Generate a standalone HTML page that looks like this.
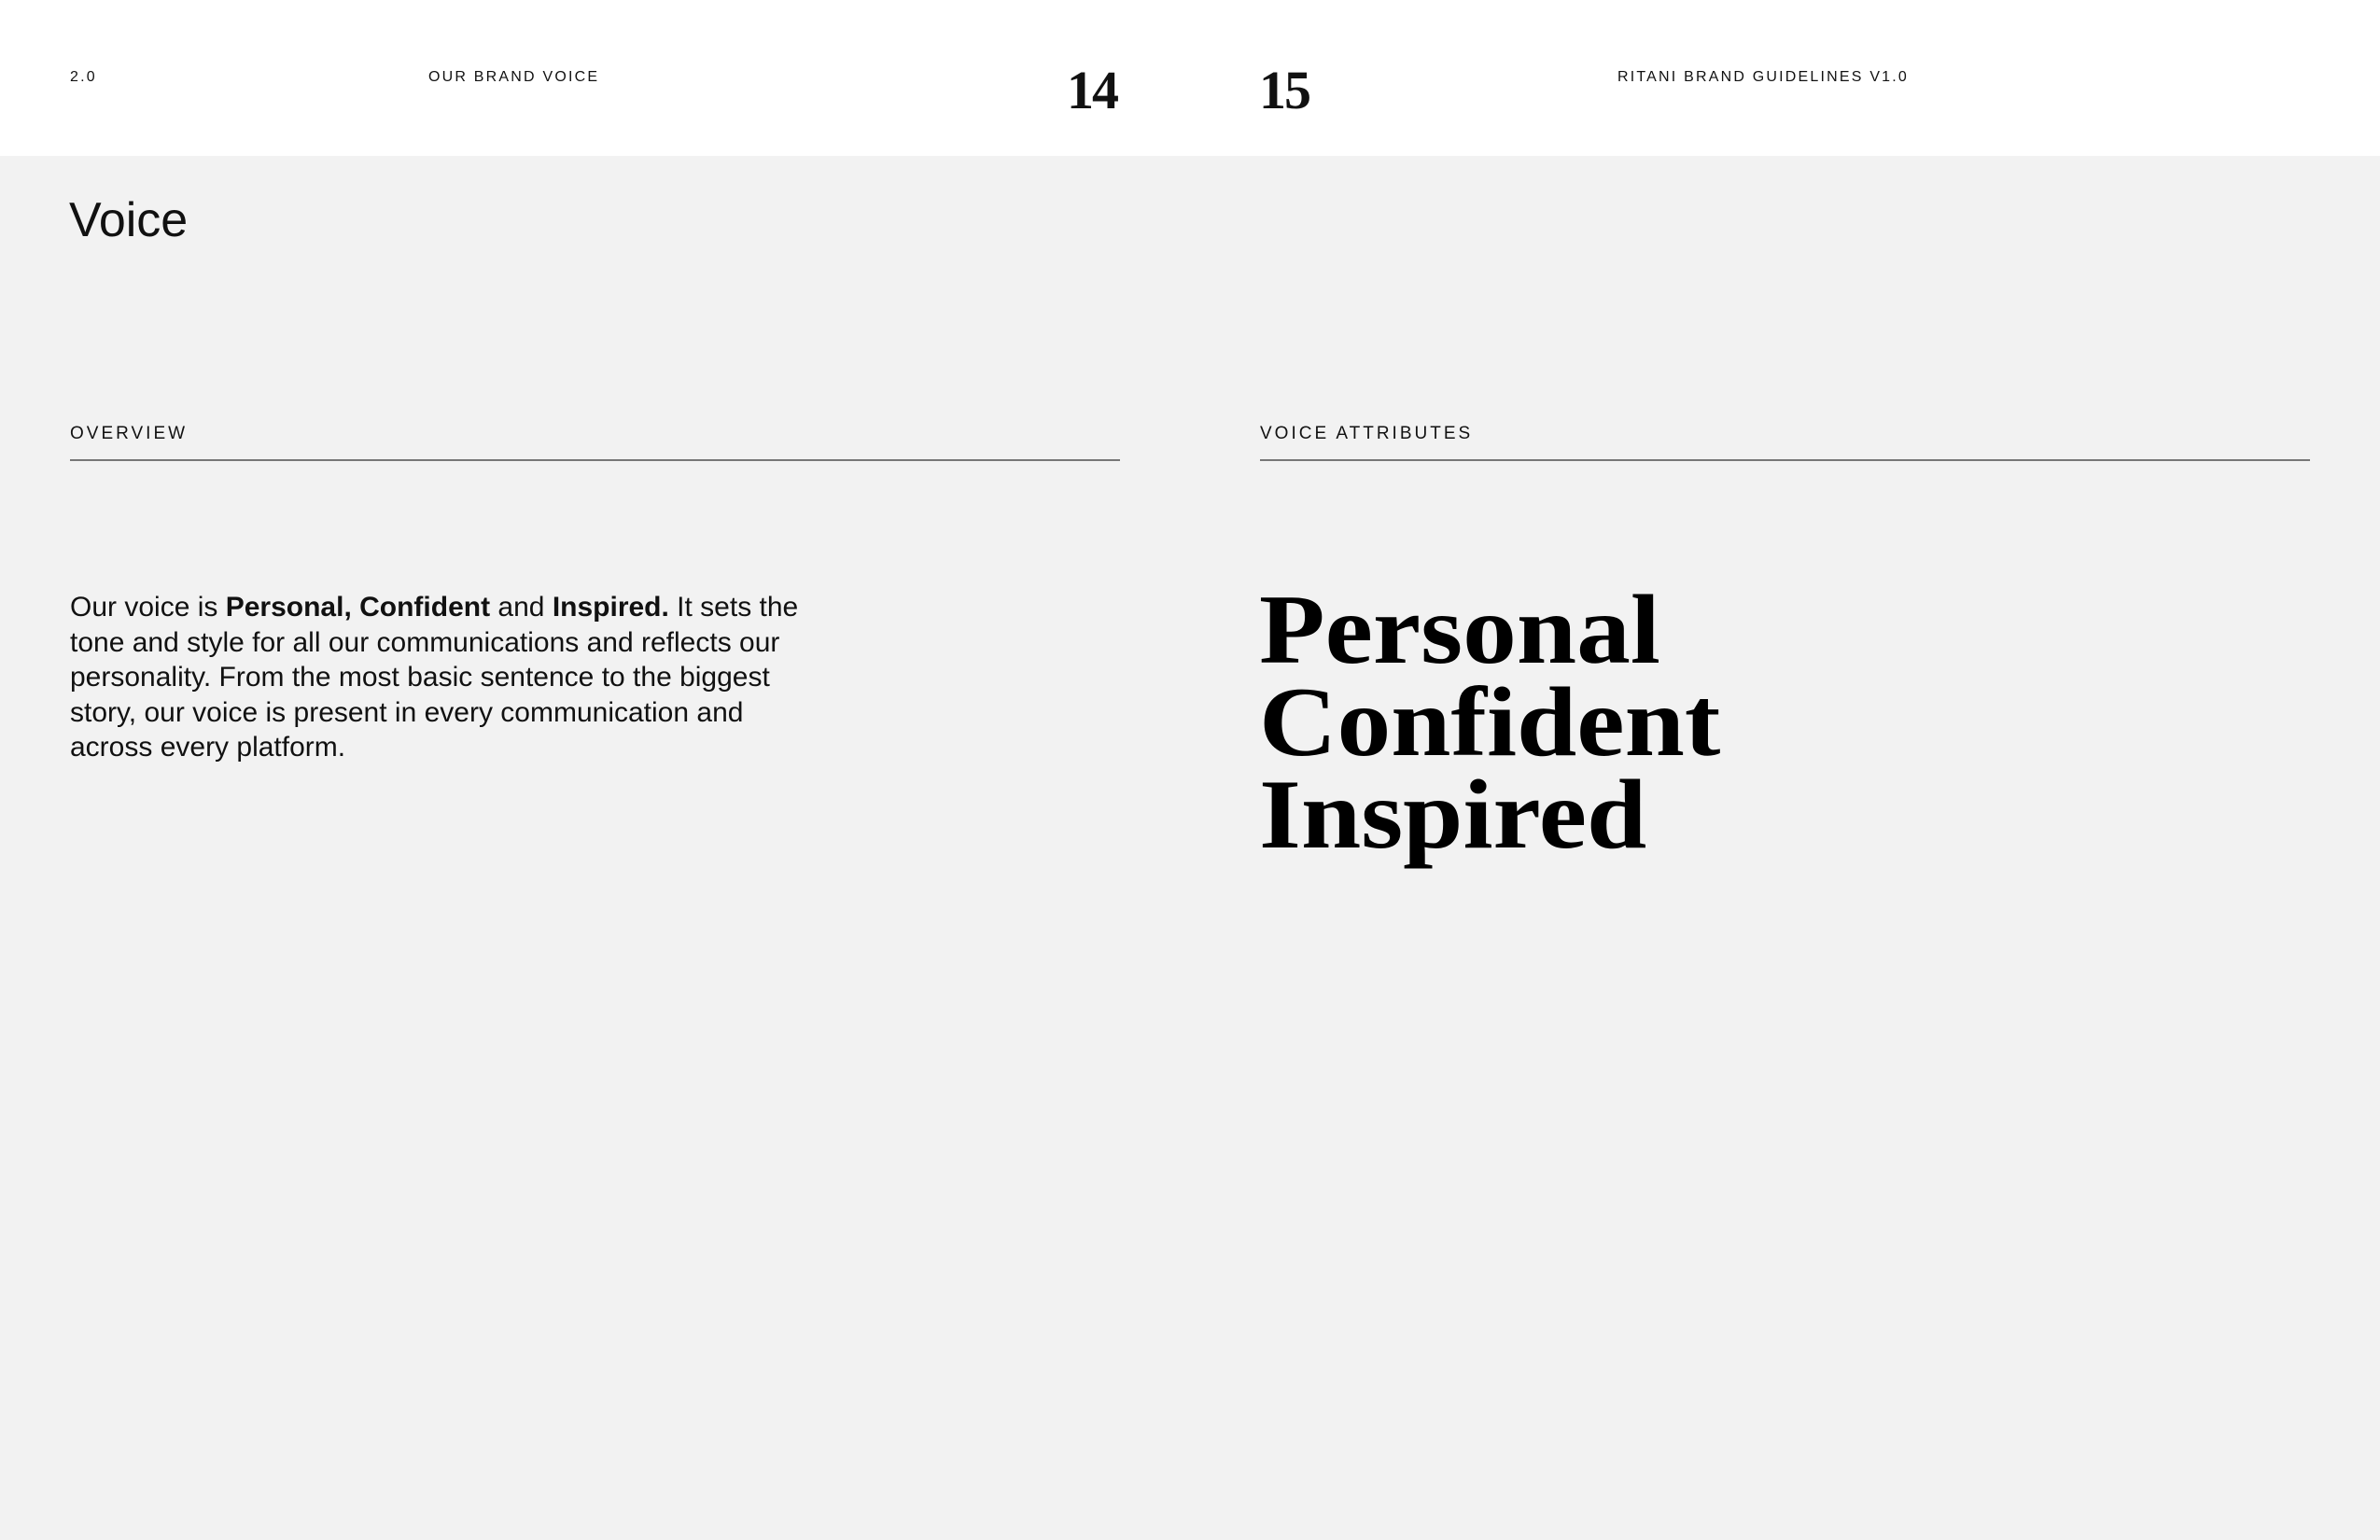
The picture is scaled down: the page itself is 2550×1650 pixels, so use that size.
<!DOCTYPE html>
<html><head><meta charset="utf-8"><style>
*{margin:0;padding:0;box-sizing:border-box}
body{width:2550px;height:1650px;background:#f2f2f2;position:relative;overflow:hidden;font-family:"Liberation Sans",sans-serif;color:#111}
.hdr{position:absolute;left:0;top:0;width:2550px;height:167px;background:#fff}
.s{position:absolute;font-size:16px;letter-spacing:2.2px;line-height:1}
.num{position:absolute;font-family:"Liberation Serif",serif;font-weight:bold;font-size:58px;line-height:1;letter-spacing:-2px}
.lab{position:absolute;font-size:19px;letter-spacing:3px;line-height:1}
.rule{position:absolute;height:2px;background:#777}
.big{position:absolute;left:1349px;font-family:"Liberation Serif",serif;font-weight:bold;font-size:106px;line-height:1;letter-spacing:0;color:#000;transform:scaleX(1.09);transform-origin:0 0;white-space:nowrap}
</style></head><body>
<div class="hdr"></div>
<div class="s" style="left:75px;top:75px">2.0</div>
<div class="s" style="left:459px;top:75px">OUR BRAND VOICE</div>
<div class="num" style="left:1143px;top:68px">14</div>
<div class="num" style="left:1349px;top:68px">15</div>
<div class="s" style="left:1733px;top:75px">RITANI BRAND GUIDELINES V1.0</div>
<div style="position:absolute;left:74px;top:210px;font-size:52px;line-height:1">Voice</div>
<div class="lab" style="left:75px;top:455px">OVERVIEW</div>
<div class="rule" style="left:75px;top:492px;width:1125px"></div>
<div class="lab" style="left:1350px;top:455px">VOICE ATTRIBUTES</div>
<div class="rule" style="left:1350px;top:492px;width:1125px"></div>
<div style="position:absolute;left:75px;top:632px;white-space:nowrap;font-size:30px;line-height:37.5px">Our voice is <b>Personal, Confident</b> and <b>Inspired.</b> It sets the<br>tone and style for all our communications and reflects our<br>personality. From the most basic sentence to the biggest<br>story, our voice is present in every communication and<br>across every platform.</div>
<div class="big" style="top:622px">Personal</div>
<div class="big" style="top:721px">Confident</div>
<div class="big" style="top:820px">Inspired</div>
</body></html>
